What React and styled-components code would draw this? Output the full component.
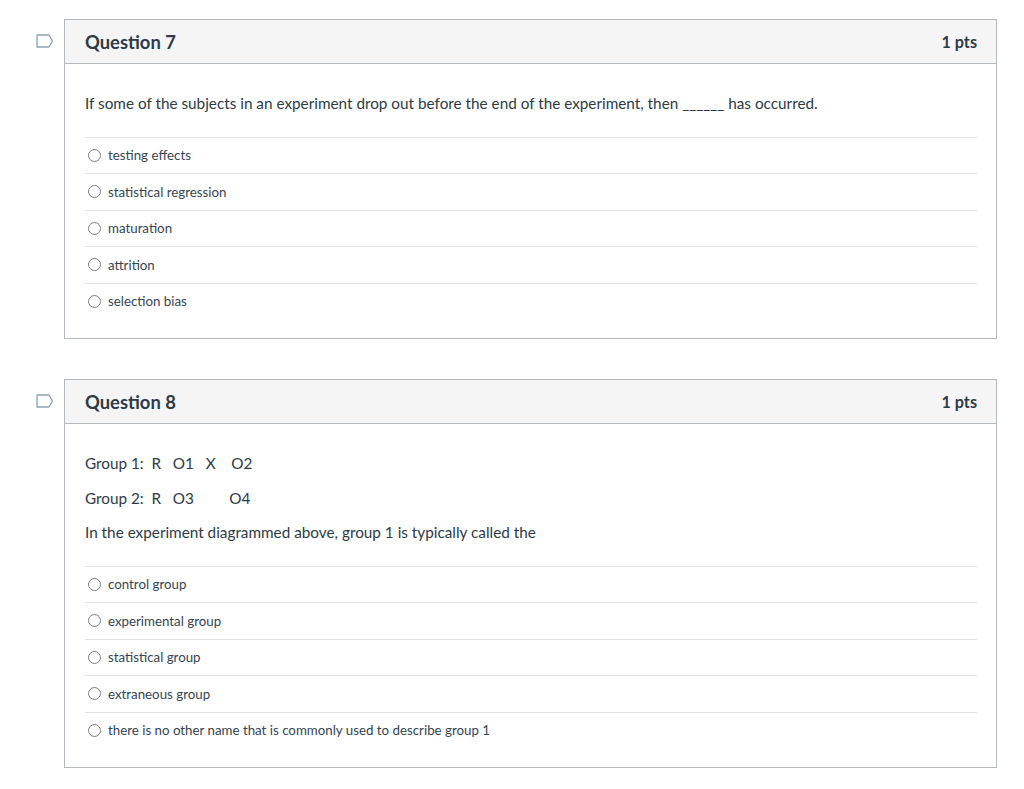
import React from "react";
import styled, { createGlobalStyle } from "styled-components";

const GlobalStyle = createGlobalStyle`
  html, body {
    margin: 0;
    padding: 0;
    background: #ffffff;
  }
  body {
    font-family: Lato, "Open Sans", "Liberation Sans", sans-serif;
    color: #2d3b45;
  }
`;

const Page = styled.div`
  display: flex;
  flex-direction: column;
  gap: 40px;
  padding: 19px 27px 20px 36px;
`;

const QuestionRow = styled.div`
  display: flex;
  align-items: flex-start;
`;

const FlagCell = styled.div`
  width: 28px;
  flex: none;
  padding-top: 13px;
`;

const Card = styled.div`
  flex: 1;
  border: 1px solid #b4b9bd;
  background: #fff;
`;

const Header = styled.div`
  display: flex;
  align-items: center;
  justify-content: space-between;
  height: 43px;
  padding: 0 19px 0 20px;
  background: #f5f5f5;
  border-bottom: 1px solid #b4b9bd;
`;

const Title = styled.div`
  font-size: 18.4px;
  font-weight: 700;
`;

const Points = styled.div`
  font-size: 16.2px;
  font-weight: 700;
`;

const Body = styled.div`
  padding: 29px 19px 19px 20px;
`;

const Text = styled.p`
  margin: 0 0 14.5px;
  font-size: 15.3px;
  line-height: 20px;
  white-space: pre;
`;

const Answers = styled.div`
  margin-top: 23.5px;
`;

const Answer = styled.div`
  display: flex;
  align-items: center;
  gap: 7px;
  height: 36.5px;
  box-sizing: border-box;
  border-top: 1px solid #dfe2e5;
  padding-left: 3px;
  font-size: 13.3px;
  color: #364550;
`;

const Radio = styled.span`
  width: 11px;
  height: 11px;
  border-radius: 50%;
  border: 1px solid #7b7f83;
  background: #fff;
  flex: none;
`;

const Flag = () => (
  <svg width="18" height="14" viewBox="0 0 18 14">
    <path
      d="M1 1 H13 L16.5 7 L13 13 H1 Z"
      fill="none"
      stroke="#8aa0b6"
      strokeWidth="1.3"
      strokeLinejoin="round"
    />
  </svg>
);

const Question = ({ title, text, answers }) => (
  <QuestionRow>
    <FlagCell>
      <Flag />
    </FlagCell>
    <Card>
      <Header>
        <Title>{title}</Title>
        <Points>1 pts</Points>
      </Header>
      <Body>
        {text.map((t, i) => (
          <Text key={i}>{t}</Text>
        ))}
        <Answers>
          {answers.map((a) => (
            <Answer key={a}>
              <Radio />
              {a}
            </Answer>
          ))}
        </Answers>
      </Body>
    </Card>
  </QuestionRow>
);

const questions = [
  {
    title: "Question 7",
    text: [
      "If some of the subjects in an experiment drop out before the end of the experiment, then ______ has occurred.",
    ],
    answers: [
      "testing effects",
      "statistical regression",
      "maturation",
      "attrition",
      "selection bias",
    ],
  },
  {
    title: "Question 8",
    text: [
      "Group 1:  R   O1   X    O2",
      "Group 2:  R   O3         O4",
      "In the experiment diagrammed above, group 1 is typically called the",
    ],
    answers: [
      "control group",
      "experimental group",
      "statistical group",
      "extraneous group",
      "there is no other name that is commonly used to describe group 1",
    ],
  },
];

const App = () => (
  <>
    <GlobalStyle />
    <Page>
      {questions.map((q) => (
        <Question key={q.title} {...q} />
      ))}
    </Page>
  </>
);

export default App;
